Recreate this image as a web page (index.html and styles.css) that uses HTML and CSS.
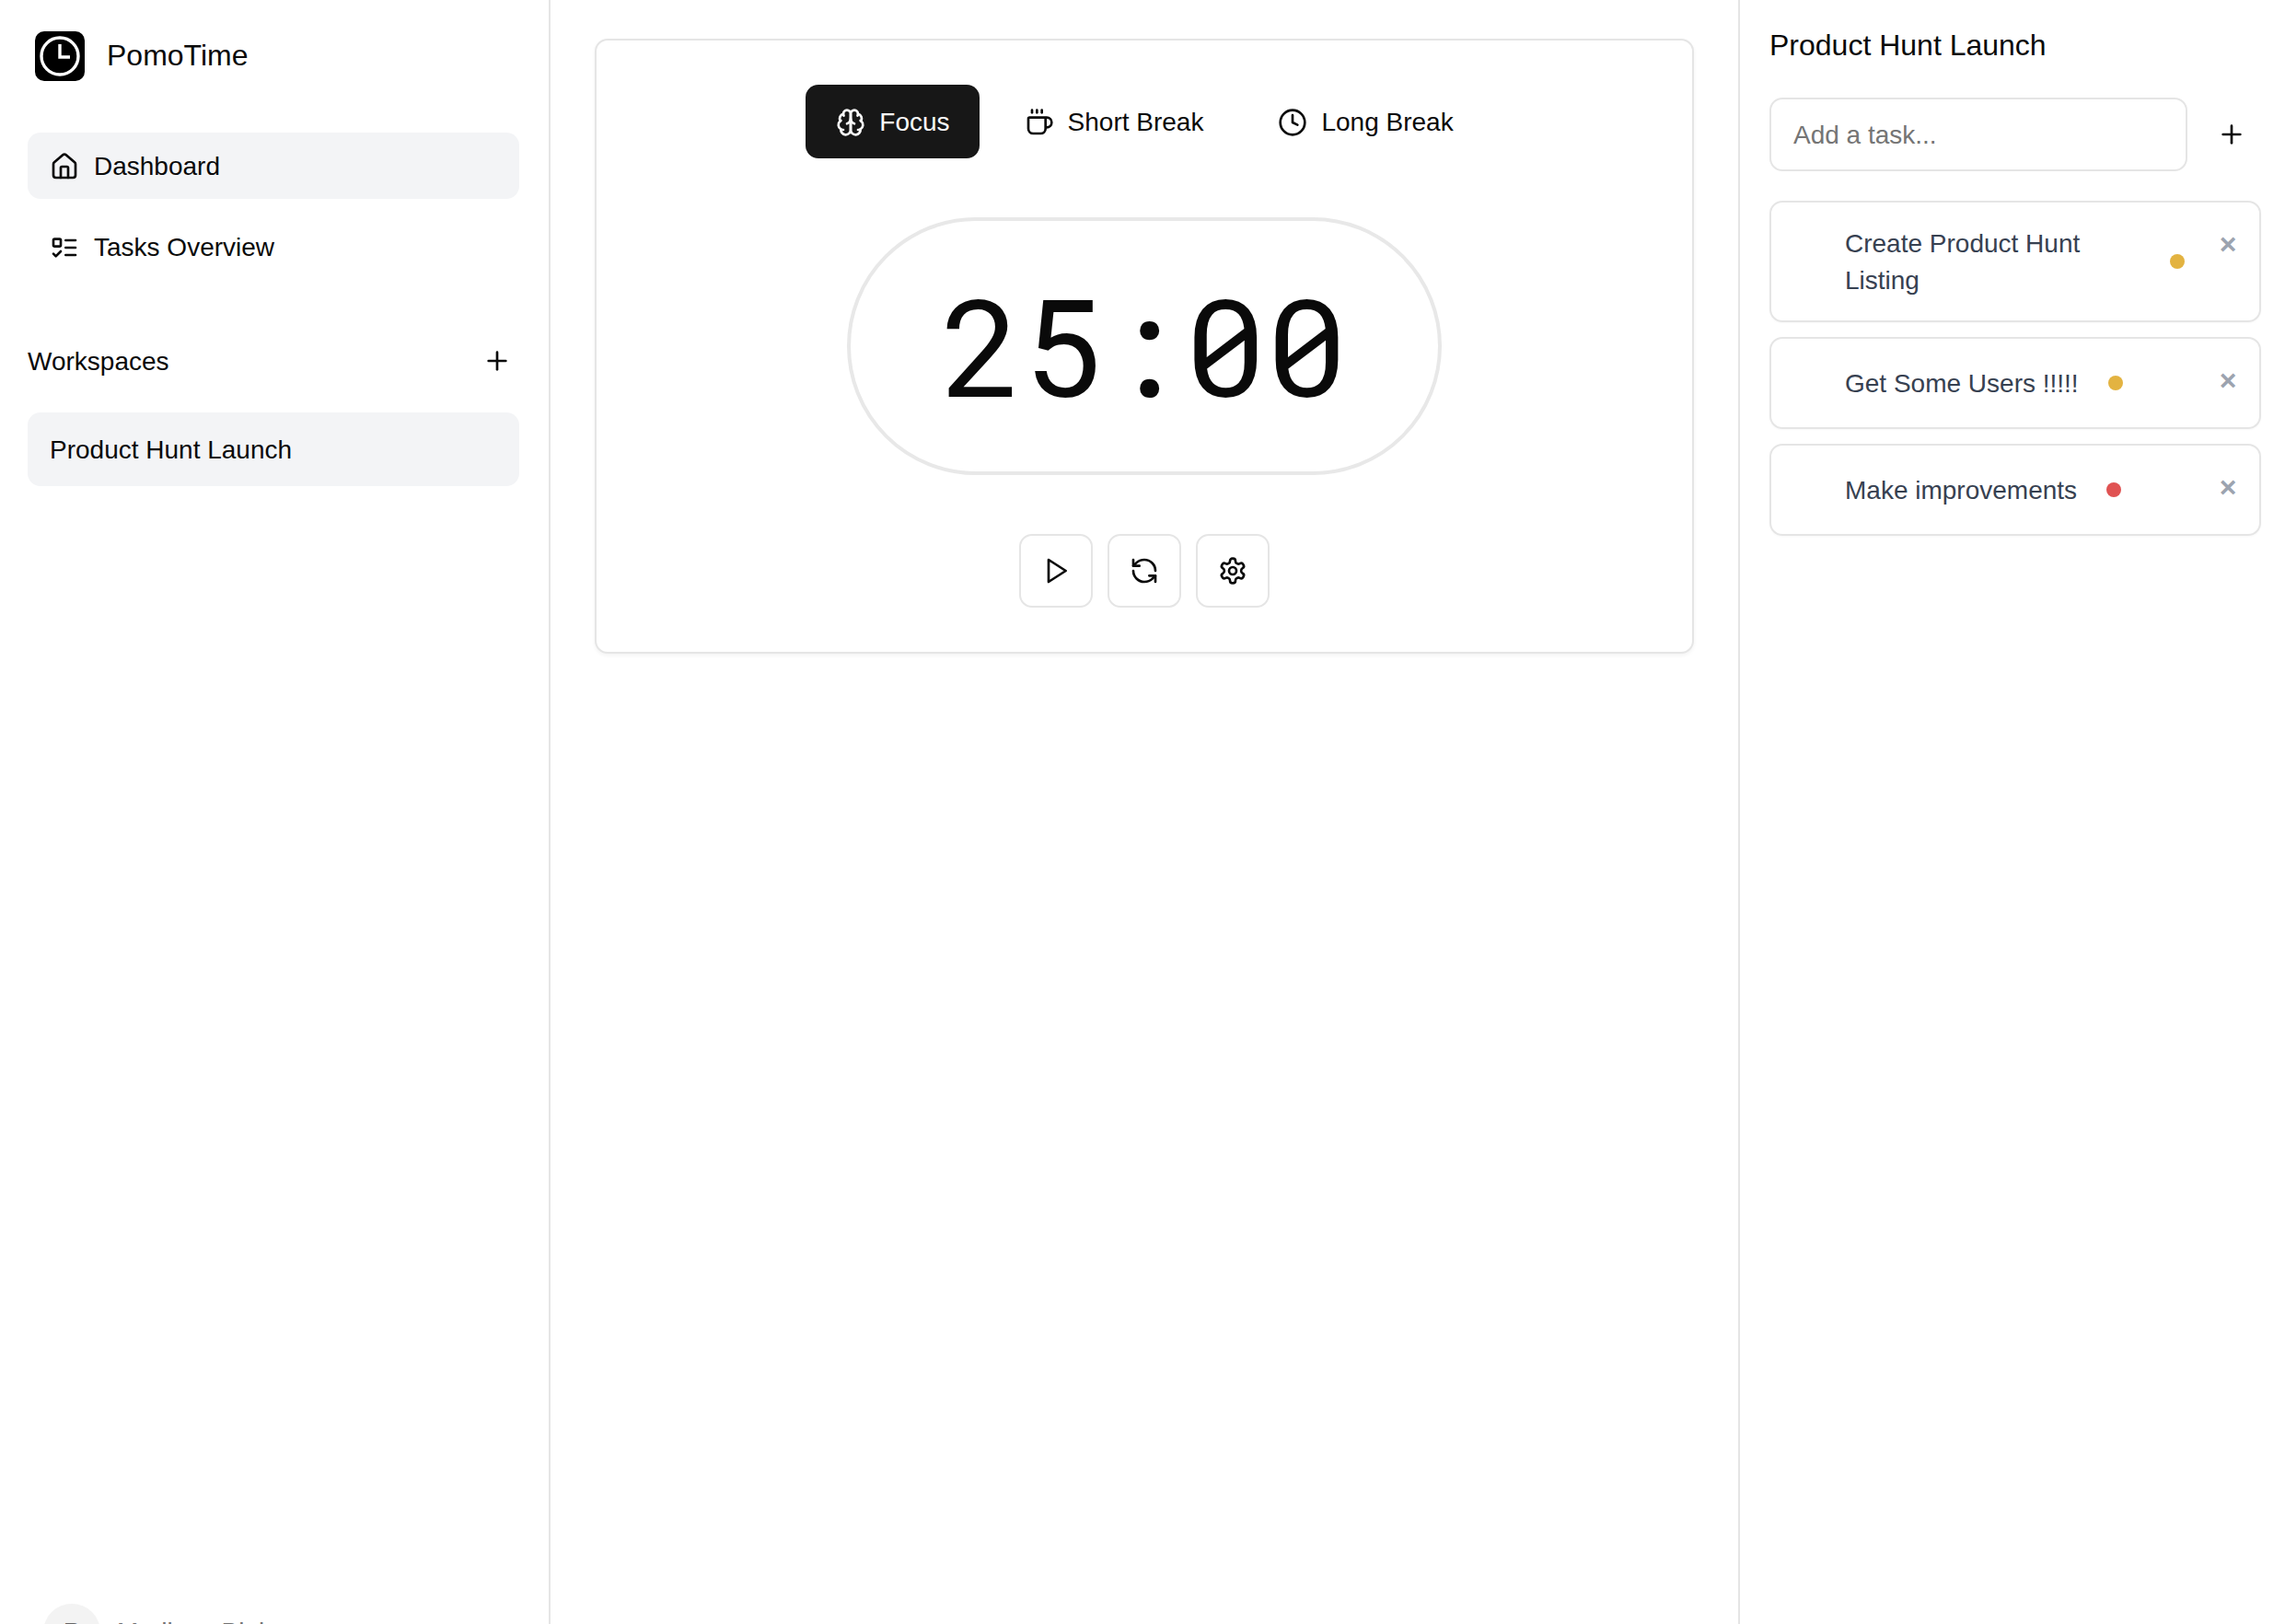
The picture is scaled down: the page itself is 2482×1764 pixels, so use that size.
FILE: index.html
```html
<!DOCTYPE html>
<html lang="en">
<head>
<meta charset="utf-8">
<title>PomoTime</title>
<link rel="stylesheet" href="styles.css">
</head>
<body>
<div class="app">
  <aside class="sidebar">
    <div class="brand">
      <svg class="logo" viewBox="0 0 54 54"><rect width="54" height="54" rx="10" fill="#000"/><circle cx="27" cy="27" r="20" fill="none" stroke="#fff" stroke-width="3.4"/><path d="M27 14v14h11" fill="none" stroke="#fff" stroke-width="3.4"/></svg>
      <span class="brand-name">PomoTime</span>
    </div>
    <nav class="nav">
      <a class="nav-item active">
        <svg class="icon" viewBox="0 0 24 24"><path d="M15 21v-8a1 1 0 0 0-1-1h-4a1 1 0 0 0-1 1v8"/><path d="M3 10a2 2 0 0 1 .709-1.528l7-5.999a2 2 0 0 1 2.582 0l7 5.999A2 2 0 0 1 21 10v9a2 2 0 0 1-2 2H5a2 2 0 0 1-2-2z"/></svg>
        Dashboard
      </a>
      <a class="nav-item">
        <svg class="icon" viewBox="0 0 24 24"><rect x="3" y="5" width="6" height="6" rx="1"/><path d="m3 17 2 2 4-4"/><path d="M13 6h8"/><path d="M13 12h8"/><path d="M13 18h8"/></svg>
        Tasks Overview
      </a>
    </nav>
    <div class="ws-head">
      <span>Workspaces</span>
      <svg class="icon" viewBox="0 0 24 24"><path d="M5 12h14"/><path d="M12 5v14"/></svg>
    </div>
    <div class="ws-item">Product Hunt Launch</div>
    <div class="user">
      <div class="avatar">P</div>
      <span class="user-name">Madison Blake</span>
    </div>
  </aside>

  <main class="main">
    <section class="card">
      <div class="tabs">
        <button class="tab active">
          <svg class="icon" viewBox="0 0 24 24"><path d="M12 5a3 3 0 1 0-5.997.125 4 4 0 0 0-2.526 5.77 4 4 0 0 0 .556 6.588A4 4 0 1 0 12 18Z"/><path d="M12 5a3 3 0 1 1 5.997.125 4 4 0 0 1 2.526 5.77 4 4 0 0 1-.556 6.588A4 4 0 1 1 12 18Z"/><path d="M15 13a4.5 4.5 0 0 1-3-4 4.5 4.5 0 0 1-3 4"/><path d="M17.599 6.5a3 3 0 0 0 .399-1.375"/><path d="M6.003 5.125A3 3 0 0 0 6.401 6.5"/><path d="M3.477 10.896a4 4 0 0 1 .585-.396"/><path d="M19.938 10.5a4 4 0 0 1 .585.396"/><path d="M6 18a4 4 0 0 1-1.967-.516"/><path d="M19.967 17.484A4 4 0 0 1 18 18"/></svg>
          Focus
        </button>
        <button class="tab">
          <svg class="icon" viewBox="0 0 24 24"><path d="M10 2v2"/><path d="M14 2v2"/><path d="M16 8a1 1 0 0 1 1 1v8a4 4 0 0 1-4 4H7a4 4 0 0 1-4-4V9a1 1 0 0 1 1-1h14a4 4 0 1 1 0 8h-1"/><path d="M6 2v2"/></svg>
          Short Break
        </button>
        <button class="tab">
          <svg class="icon" viewBox="0 0 24 24"><circle cx="12" cy="12" r="10"/><polyline points="12 6 12 12 16 14"/></svg>
          Long Break
        </button>
      </div>
      <div class="timer">25:00</div>
      <div class="controls">
        <button class="ctrl"><svg class="icon" viewBox="0 0 24 24"><polygon points="6 3 20 12 6 21 6 3"/></svg></button>
        <button class="ctrl"><svg class="icon" viewBox="0 0 24 24"><path d="M21 12a9 9 0 0 0-9-9 9.75 9.75 0 0 0-6.74 2.74L3 8"/><path d="M3 3v5h5"/><path d="M3 12a9 9 0 0 0 9 9 9.75 9.75 0 0 0 6.74-2.74L21 16"/><path d="M16 16h5v5"/></svg></button>
        <button class="ctrl"><svg class="icon" viewBox="0 0 24 24"><path d="M12.22 2h-.44a2 2 0 0 0-2 2v.18a2 2 0 0 1-1 1.73l-.43.25a2 2 0 0 1-2 0l-.15-.08a2 2 0 0 0-2.73.73l-.22.38a2 2 0 0 0 .73 2.73l.15.1a2 2 0 0 1 1 1.72v.51a2 2 0 0 1-1 1.74l-.15.09a2 2 0 0 0-.73 2.73l.22.38a2 2 0 0 0 2.73.73l.15-.08a2 2 0 0 1 2 0l.43.25a2 2 0 0 1 1 1.73V20a2 2 0 0 0 2 2h.44a2 2 0 0 0 2-2v-.18a2 2 0 0 1 1-1.73l.43-.25a2 2 0 0 1 2 0l.15.08a2 2 0 0 0 2.73-.73l.22-.39a2 2 0 0 0-.73-2.73l-.15-.08a2 2 0 0 1-1-1.74v-.5a2 2 0 0 1 1-1.74l.15-.09a2 2 0 0 0 .73-2.73l-.22-.38a2 2 0 0 0-2.73-.73l-.15.08a2 2 0 0 1-2 0l-.43-.25a2 2 0 0 1-1-1.73V4a2 2 0 0 0-2-2z"/><circle cx="12" cy="12" r="3"/></svg></button>
      </div>
    </section>
  </main>

  <aside class="panel">
    <h2 class="panel-title">Product Hunt Launch</h2>
    <div class="add-row">
      <input class="add-input" type="text" placeholder="Add a task...">
      <svg class="icon add-icon" viewBox="0 0 24 24"><path d="M5 12h14"/><path d="M12 5v14"/></svg>
    </div>
    <ul class="tasks">
      <li class="task">
        <div class="task-main"><span class="task-text">Create Product Hunt Listing</span><span class="dot amber"></span></div>
        <button class="remove">×</button>
      </li>
      <li class="task">
        <div class="task-main"><span class="task-text">Get Some Users !!!!!</span><span class="dot amber"></span></div>
        <button class="remove">×</button>
      </li>
      <li class="task">
        <div class="task-main"><span class="task-text">Make improvements</span><span class="dot red"></span></div>
        <button class="remove">×</button>
      </li>
    </ul>
  </aside>
</div>
</body>
</html>
```
FILE: styles.css
```css
* { box-sizing: border-box; }
html, body { margin: 0; height: 100%; }
body {
  font-family: "Liberation Sans", Arial, sans-serif;
  font-size: 28px;
  color: #0a0a0a;
  background: #fff;
  overflow: hidden;
}
.app { display: flex; height: 1764px; overflow: hidden; }
.icon {
  width: 32px; height: 32px; flex: none;
  fill: none; stroke: currentColor; stroke-width: 2;
  stroke-linecap: round; stroke-linejoin: round;
}

/* left sidebar */
.sidebar {
  width: 598px; flex: none;
  border-right: 2px solid #e5e5e5;
  padding: 34px 32px 0 30px;
  display: flex; flex-direction: column;
  height: 1824px;
}
.brand { display: flex; align-items: center; gap: 24px; padding-left: 8px; height: 54px; }
.logo { width: 54px; height: 54px; flex: none; }
.brand-name { font-size: 32px; padding-bottom: 1px; }
.nav { display: flex; flex-direction: column; gap: 16px; margin-top: 56px; }
.nav-item {
  display: flex; align-items: center; gap: 16px;
  height: 72px; padding: 1px 24px 0;
  border-radius: 14px;
}
.nav-item.active { background: #f3f4f6; }
.ws-head {
  display: flex; align-items: center; justify-content: space-between;
  margin-top: 64px; height: 48px; padding: 0 8px 0 0;
}
.ws-head span { padding-top: 1px; }
.ws-item {
  display: flex; align-items: center;
  height: 80px; margin-top: 32px; padding: 1px 24px 0;
  background: #f3f4f6; border-radius: 14px;
}
.user { display: flex; align-items: center; gap: 18px; margin-top: auto; padding: 0 17px; height: 94px; margin-bottom: 4px; }
.avatar {
  width: 62px; height: 62px; border-radius: 50%;
  background: #f3f3f3; color: #666;
  display: flex; align-items: center; justify-content: center;
  font-size: 28px; flex: none;
}
.user-name { color: #737373; font-size: 28px; }

/* main */
.main { flex: 1; min-width: 0; padding: 42px 48px 0; }
.card {
  background: #fff;
  border: 2px solid #e5e5e5;
  border-radius: 14px;
  box-shadow: 0 2px 4px rgba(0,0,0,.05);
  padding: 48px;
  display: flex; flex-direction: column; align-items: center; gap: 64px;
}
.tabs { display: flex; gap: 16px; }
.tab {
  display: flex; align-items: center; gap: 15px;
  height: 80px; padding: 1px 32px 0 33px;
  border: 0; border-radius: 14px;
  background: transparent; color: #0a0a0a;
  font: inherit;
}
.tab.active { background: #171717; color: #fafafa; }
.timer {
  width: 646px; height: 280px;
  border: 4px solid #e8e8e8; border-radius: 140px;
  display: flex; align-items: center; justify-content: center;
  font-family: "Roboto Mono", "DejaVu Sans Mono", monospace;
  font-size: 147px; font-weight: 430; line-height: 1;
  padding-bottom: 4px;
  color: #0a0a0a;
}
.controls { display: flex; gap: 16px; }
.ctrl {
  width: 80px; height: 80px; padding: 0;
  display: flex; align-items: center; justify-content: center;
  background: #fff; color: #0a0a0a;
  border: 2px solid #e5e5e5; border-radius: 14px;
}

/* right panel */
.panel {
  width: 594px; flex: none;
  border-left: 2px solid #e5e5e5;
  padding: 31px 26px 0 32px;
}
.panel-title { margin: 0; font-size: 32px; font-weight: 400; line-height: 36px; }
.add-row { display: flex; align-items: center; margin-top: 39px; gap: 32px; }
.add-input {
  width: 454px; height: 80px; padding: 1px 24px 0;
  border: 2px solid #e5e5e5; border-radius: 14px;
  font: inherit; color: #0a0a0a;
  background: #fff;
}
.add-input::placeholder { color: #757575; opacity: 1; }
.tasks { list-style: none; margin: 32px 0 0; padding: 0; display: flex; flex-direction: column; gap: 16px; }
.task {
  display: flex; align-items: center;
  padding: 24px 25px 24px 80px;
  min-height: 100px;
  border: 2px solid #e5e5e5; border-radius: 14px;
  box-shadow: 0 1px 2px rgba(0,0,0,.03);
}
.task-main { flex: 1; min-width: 0; display: flex; align-items: center; gap: 32px; }
.task-text { line-height: 40px; color: #374151; padding-top: 1px; margin-bottom: -1px; }
.dot { width: 16px; height: 16px; border-radius: 50%; flex: none; }
.dot.amber { background: #e3b341; }
.dot.red { background: #e05252; }
.remove {
  align-self: flex-start; flex: none;
  width: 18px; height: 42px; margin-left: 38px; padding: 0;
  display: flex; align-items: center; justify-content: center;
  border: 0; background: none; color: #9ca3af;
  font: bold 32px/1 "Liberation Sans", sans-serif;
}
```
